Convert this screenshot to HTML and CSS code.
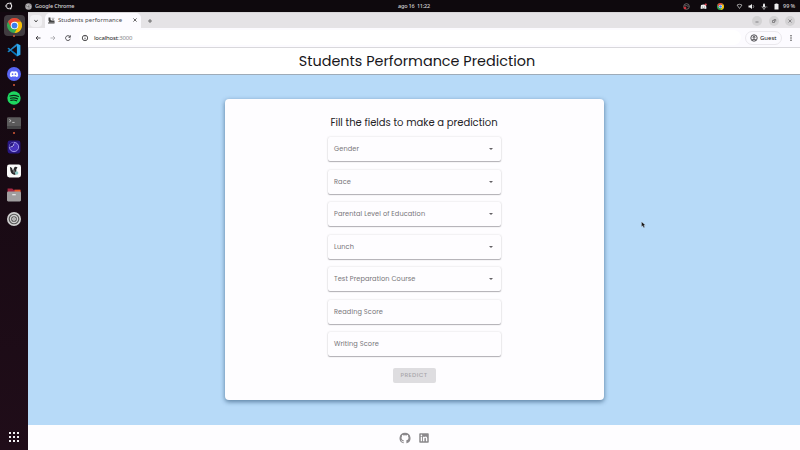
FILE: index.html
```html
<!DOCTYPE html>
<html lang="en">
<head>
<meta charset="utf-8">
<title>Students performance</title>
<link rel="stylesheet" href="styles.css">
</head>
<body>
<svg width="0" height="0" class="defs">
  <symbol id="chrome" viewBox="0 0 24 24"><circle cx="12" cy="12" r="12" fill="#35a853"/><path d="M1.6 6A12 12 0 0 1 22.4 6H12L6.8 15Z" fill="#e94335"/><path d="M22.4 6A12 12 0 0 1 12 24L17.2 15 12 6Z" fill="#fbbc05"/><circle cx="12" cy="12" r="6" fill="#fff"/><circle cx="12" cy="12" r="4.6" fill="#3b7ded"/></symbol>
  <symbol id="discord" viewBox="0 0 24 24"><path d="M8 5Q5 5 3 7 0 12 0 18q3 3 6 3l2-2q4 1 8 0l2 2q3 0 6-3 0-6-3-11-2-2-5-2l-1 1q-3-.5-6 0Z" fill="#fff"/><ellipse cx="8" cy="13" rx="2.3" ry="2.6" fill="#5865f2"/><ellipse cx="16" cy="13" rx="2.3" ry="2.6" fill="#5865f2"/></symbol>
</svg>
<header class="system">
  <svg class="ubuntu" viewBox="0 0 14 14" fill="none" stroke="#f3f0f2"><circle cx="7" cy="7" r="4.7" stroke-width="1.8"/><g fill="#f3f0f2" stroke="#0e090d" stroke-width=".8"><circle cx="2" cy="7" r="2"/><circle cx="9.6" cy="2.600" r="2"/><circle cx="9.6" cy="11.400" r="2"/></g></svg>
  <svg class="appicon" viewBox="0 0 14 14"><circle cx="7" cy="7" r="6.5" fill="#aaa7aa"/><circle cx="7" cy="7" r="3" fill="#777" stroke="#ddd" stroke-width="1.2"/><path d="M7 4h6M4.5 8.5 2 4M9.5 8.5 6.5 13" stroke="#656565"/></svg>
  <span class="appname">Google Chrome</span>
  <span class="clock">ago 16&nbsp; 11:22</span>
  <div class="tray">
    <svg viewBox="0 0 14 14" fill="none" stroke="#8f8b8d" stroke-width="1.4"><circle cx="7" cy="7" r="5.6"/><path d="M3 6q4-2 8 1"/><circle cx="4" cy="10" r="2" fill="#df3340" stroke="#df3340"/></svg>
    <svg viewBox="0 0 14 14"><path d="M2 4q5-2 10 0l1 7-3 1-1-1H5l-1 1-3-1Z" fill="#eee"/><circle cx="5" cy="8" r="1" fill="#777"/><circle cx="9" cy="8" r="1" fill="#777"/><circle cx="11.500" cy="3" r="2.200" fill="#e44452"/></svg>
    <svg><use href="#chrome"/></svg>
    <svg viewBox="0 0 14 14" fill="none" stroke="#bbb" stroke-width="1.6"><path d="M2 4q5-3 10 0L7 11Z"/></svg>
    <svg viewBox="0 0 14 14" fill="#eee"><path d="M1 5h3l4-3v10L4 9H1Z"/><path d="M10 4q3 3 0 6" fill="none" stroke="#aaa" stroke-width="1.5"/></svg>
    <svg viewBox="0 0 14 14" fill="#eee"><rect x="4" y="1" width="4" height="8" rx="2"/><path d="M2 6q0 5 4 5t4-5M6 11v3" fill="none" stroke="#ddd" stroke-width="1.2"/><circle cx="12" cy="8" r="1" fill="#888"/></svg>
    <svg viewBox="0 0 14 14" fill="#eee"><path d="M5 1h4v1h2v11H3V2h2Z"/></svg>
    <span>99 %</span>
  </div>
</header>
<div class="desktop">
  <nav class="dock">
    <div class="app active running"><svg><use href="#chrome"/></svg></div>
    <div class="app running"><svg viewBox="0 0 24 24"><path d="M2.500 8 17 19v4L1 9.300Z" fill="#0877b9"/><path d="M2.500 16 17 5V1L1 14.700Z" fill="#2489ca"/><path d="m1 9.300 1.500-1.300L7 11.500 4.500 14.500 2.500 16 1 14.700 4 12Z" fill="#1782c2"/><path d="M17 1v22l6-3V4Z" fill="#2fa8ee"/></svg></div>
    <div class="app running"><svg viewBox="0 0 24 24"><circle cx="12" cy="12" r="12" fill="#5865f2"/><use href="#discord" x="4.500" y="4" width="15" height="15"/></svg></div>
    <div class="app running"><svg viewBox="0 0 24 24"><circle cx="12" cy="12" r="11.5" fill="#1ed760"/><path d="M5 8.5q8-2.5 14.5 1M6 12.5q7-2 12 1M6.5 16q6-1.5 10 .8" fill="none" stroke="#0b2514" stroke-width="2" stroke-linecap="round"/></svg></div>
    <div class="app running"><svg viewBox="0 0 24 24"><rect y="2" width="24" height="20" rx="2" fill="#5b5a5b"/><path d="M0 17h24v3q0 2-2 2H2q-2 0-2-2Z" fill="#454446"/><path d="m4 6 3 2-3 2M9 11h4" fill="none" stroke="#ddd" stroke-width="1.3"/></svg></div>
    <div class="app"><svg viewBox="0 0 24 24"><rect x="1" y="1" width="22" height="22" rx="4" fill="#281782"/><circle cx="12" cy="12" r="8" fill="#4934be" stroke="#a59bf0" stroke-width="1.6"/><path d="M12 4v8H4q0-7 8-8Z" fill="#271780"/><path d="M12 6q0 6-6 6" fill="none" stroke="#c9c3fa" stroke-width="1.500"/></svg></div>
    <div class="app"><svg viewBox="0 0 24 24"><rect x="0" y="1" width="24" height="22" rx="4" fill="#fafafa"/><path d="M5 5q4 0 5 6l3-6q3-1 5 1l-2 3v6l-2 4q-7-1-8-7Z" fill="#29282a"/><path d="M10 9q3 2 2 6" stroke="#fff" fill="none"/><circle cx="16.500" cy="15.500" r="3" fill="#8dc8c5"/></svg></div>
    <div class="app"><svg viewBox="0 0 24 24"><path d="M1 1h8l2 2h12v6H1Z" fill="#a72742"/><path d="M13 3h10v4H13Z" fill="#e85b27"/><rect y="6" width="24" height="17" rx="2" fill="#a09e9f"/><path d="M9 11.500h6" stroke="#eee" stroke-width="2"/></svg></div>
    <div class="app"><svg viewBox="0 0 24 24"><circle cx="12" cy="12" r="12" fill="#d0d0d0"/><circle cx="12" cy="12" r="8.200" fill="none" stroke="#555" stroke-width="2"/><circle cx="12" cy="12" r="4" fill="#eee" stroke="#555" stroke-width="1.8"/><circle cx="12" cy="12" r="1.300" fill="#555"/></svg></div>
    <svg class="grid" viewBox="0 0 11 11" fill="#f2f0f2"><path d="M0 0h2v2H0ZM4 0h2v2H4ZM8 0h2v2H8ZM0 4h2v2H0ZM4 4h2v2H4ZM8 4h2v2H8ZM0 8h2v2H0ZM4 8h2v2H4ZM8 8h2v2H8Z"/></svg>
  </nav>
  <section class="browser">
    <div class="tabs">
      <div class="tabmenu"><svg viewBox="0 0 8 8"><path d="m2.400 3.300 1.600 1.400 1.600-1.400" fill="none" stroke="#333" stroke-width="1"/></svg></div>
      <div class="tab"><svg class="favicon" viewBox="0 0 14 14"><path d="M1 1h4v4l2 2h6v6H0v-2h3L1 7Z" fill="#444"/><path d="M7 2.500h6M8 5h4M3 11h9" stroke="#888" stroke-width="1.300"/></svg><span>Students performance</span><svg class="close" viewBox="0 0 8 8"><path d="m2.400 2.400 3.200 3.200m0-3.200L2.400 5.600" stroke="#444" stroke-width=".8"/></svg></div>
      <svg class="plus" viewBox="0 0 8 8"><path d="M4 2v4M2 4h4" stroke="#555" stroke-width=".8"/></svg>
      <div class="controls"><svg viewBox="0 0 10 10"><path d="M3.500 6h3"/></svg><svg viewBox="0 0 10 10"><path d="M3.500 4.500v2h2v-2ZM4.700 3.500h2v2"/></svg><svg viewBox="0 0 10 10"><path d="m3.500 3.500 3 3m0-3-3 3"/></svg></div>
    </div>
    <div class="toolbar">
      <svg viewBox="0 0 8 8"><path d="M6.500 4H2M4 2 2 4 4 6"/></svg>
      <svg class="muted" viewBox="0 0 8 8"><path d="M1.500 4H6M4 2l2 2-2 2"/></svg>
      <svg viewBox="0 0 8 8"><path d="M6 2.800A2.400 2.400 0 1 0 6.300 4.700M6.300 1.300v2H4.500"/></svg>
      <div class="address"><svg viewBox="0 0 8 8"><circle cx="4" cy="4" r="2.7"/><path d="M4 3.7v1.7M4 2.400v.7"/></svg><span class="url"><b>localhost</b>:3000</span></div>
      <div class="guest"><svg viewBox="0 0 8 8"><circle cx="4" cy="4" r="3.2"/><circle cx="4" cy="3.2" r="1"/><path d="M2 6q2-1.7 4 0"/></svg><span>Guest</span></div>
      <svg class="kebab" viewBox="0 0 8 8"><circle cx="4" cy="1.7" r=".7"/><circle cx="4" cy="4" r=".7"/><circle cx="4" cy="6.300" r=".7"/></svg>
    </div>
    <div class="page">
      <header class="title"><h1>Students Performance Prediction</h1></header>
      <main>
        <form class="card">
          <h2>Fill the fields to make a prediction</h2>
          <div class="fields">
            <div class="field select"><span>Gender</span></div>
            <div class="field select"><span>Race</span></div>
            <div class="field select"><span>Parental Level of Education</span></div>
            <div class="field select"><span>Lunch</span></div>
            <div class="field select"><span>Test Preparation Course</span></div>
            <div class="field"><span>Reading Score</span></div>
            <div class="field"><span>Writing Score</span></div>
          </div>
          <button type="button" disabled>PREDICT</button>
        </form>
      </main>
      <footer>
        <svg viewBox="0 0 24 24"><path d="M12 1.3a11 11 0 0 0-3.5 21.4c.6.1.8-.2.8-.5v-2c-3.1.7-3.8-1.3-3.8-1.3-.5-1.3-1.2-1.7-1.2-1.7-1-.7.1-.7.1-.7 1.1.1 1.7 1.2 1.7 1.2 1 1.7 2.7 1.2 3.3.9.1-.7.4-1.2.7-1.5-2.4-.3-5-1.2-5-5.4 0-1.2.4-2.2 1.1-3-.1-.3-.5-1.4.1-2.9 0 0 .9-.3 3 1.1a10 10 0 0 1 5.5 0c2.1-1.4 3-1.1 3-1.1.6 1.5.2 2.6.1 2.9.7.8 1.1 1.8 1.1 3 0 4.2-2.6 5.1-5 5.4.4.3.8 1 .8 2v3.1c0 .3.2.6.8.5A11 11 0 0 0 12 1.3Z"/></svg>
        <svg viewBox="0 0 24 24"><path fill-rule="evenodd" d="M4 2.500h16q1.500 0 1.500 1.500v16q0 1.500-1.500 1.500H4Q2.500 21.500 2.500 20V4Q2.500 2.500 4 2.500ZM5.500 9.500v9h2.700v-9ZM6.900 5.200a1.600 1.600 0 1 0 0 3.200 1.600 1.600 0 0 0 0-3.200ZM10 9.500v9h2.800v-5q0-2 1.500-2t1.500 2v5h2.700v-5.500q0-3.800-3-3.800-1.900 0-2.700 1.500V9.500Z"/></svg>
      </footer>
    </div>
  </section>
</div>
<svg class="cursor" viewBox="0 0 6 9"><path d="M.6.5v6.200l1.500-1.300 1.100 2.500 1.300-.6-1.100-2.400h2Z" fill="#171717" stroke="#dce8f2" stroke-width=".4"/></svg>
</body>
</html>
```
FILE: styles.css
```css
* { box-sizing: border-box; }
body { margin: 0; width: 800px; height: 450px; overflow: hidden; font-family: "Noto Sans", sans-serif; }
svg { display: block; flex: none; }
.defs { position: absolute; }
.system { position: relative; height: 12px; background: #0e090d; color: #d8d5d7; display: flex; align-items: center; padding-left: 5px; font-size: 5.500px; line-height: 12px; font-weight: 500; letter-spacing: -.13px; }
.ubuntu { width: 8px; height: 8px; }
.appicon { width: 7px; height: 7px; margin-left: 12px; }
.appname { padding-left: 3px; }
.clock { position: absolute; left: 398px; top: 0; white-space: nowrap; letter-spacing: -.2px; }
.tray { position: absolute; right: 5px; top: 0; height: 12px; display: flex; align-items: center; }
.tray svg { width: 7px; height: 7px; margin-right: 5.500px; }
.tray svg:nth-child(1), .tray svg:nth-child(2) { margin-right: 10px; }
.tray svg:nth-child(3) { margin-right: 12px; }
.tray svg:nth-child(7) { margin-right: 3px; }
.desktop { display: flex; height: 438px; }
.dock { width: 28px; background: linear-gradient(#130810, #200d19); display: flex; flex-direction: column; align-items: center; padding-top: 3.300px; }
.app { width: 21px; height: 21px; margin-bottom: 3.200px; display: grid; place-items: center; position: relative; border-radius: 4px; }
.app svg { width: 14px; height: 14px; }
.app.active { background: #413b40; }
.app.active svg { width: 15px; height: 15px; }
.app.running::after { content: ""; position: absolute; left: 9.500px; bottom: -1px; width: 2px; height: 2px; border-radius: 1px; background: #d85a37; }
.grid { width: 11px; height: 11px; margin: auto 0 7px; }
.browser { width: 772px; background: #fff; display: flex; flex-direction: column; }
.tabs { height: 16px; background: #e5e3e6; display: flex; align-items: center; border-top: 1px solid #d8d6d8; }
.tabmenu { width: 12px; height: 12px; margin-left: 2px; border-radius: 4px; background: #f3f2f5; display: grid; place-items: center; }
.tabmenu svg { width: 8px; height: 8px; }
.tab { margin-left: 3px; width: 96px; height: 15px; background: #fcfbff; border-radius: 5px 5px 0 0; display: flex; align-items: center; padding: 0 0 1px 3px; font-size: 6px; color: #4b4a4d; }
.favicon { width: 7px; height: 7px; margin-right: 3px; }
.tab span { width: 73px; white-space: nowrap; letter-spacing: .05px; }
.close, .plus { width: 8px; height: 8px; }
.plus { margin-left: 5px; }
.controls { margin-left: auto; display: flex; gap: 6.500px; padding-right: 5px; }
.controls svg { width: 10px; height: 10px; border-radius: 50%; background: #d3d2d4; fill: none; stroke: #656467; stroke-width: .7; }
.toolbar { height: 20px; background: #fcfbff; border-bottom: 1px solid #d9d8dc; display: flex; align-items: center; padding: 0 5px 0 6px; }
.toolbar > svg, .address svg, .guest svg { width: 8px; height: 8px; margin-right: 7px; fill: none; stroke: #343336; stroke-width: .85; }
.toolbar .muted { stroke: #aaa9ad; }
.address { height: 15px; width: 662px; border-radius: 8px; background: #fff; display: flex; align-items: center; padding-left: 2px; font-size: 6px; color: #88878b; }
.address svg { margin-right: 5px; }
.url { white-space: nowrap; letter-spacing: -.18px; }
.url b { font-weight: 400; color: #222; }
.guest { width: 37px; height: 14px; border: 1px solid #eae8ed; border-radius: 7px; display: flex; align-items: center; padding-left: 4px; margin-left: 4px; font-size: 6px; font-weight: 400; color: #222; flex: none; }
.guest svg { margin-right: 2px; }
.toolbar > .kebab { fill: #333; stroke: none; margin: 0 0 0 5px; }
.page { height: 402px; display: flex; flex-direction: column; box-shadow: inset 1px 0 #d6dfe8; font-family: Poppins, Lato, sans-serif; }
.title { height: 27px; border-bottom: 1px solid #9eabb8; display: grid; place-items: center; }
h1, h2 { margin: 0; font-weight: 400; white-space: nowrap; }
h1 { font-size: 14.400px; line-height: 24px; color: #171619; padding-left: 6px; }
main { height: 350px; background: #b7daf8; display: flex; justify-content: center; padding-top: 24px; }
.card { width: 379px; height: 301px; background: #fefdff; border-radius: 4px; box-shadow: 0 2px 4px #40648699, 0 1px 5px #52769855; display: flex; flex-direction: column; align-items: center; padding-top: 16px; }
h2 { font-size: 10px; line-height: 16px; color: #242326; }
.fields { display: grid; gap: 8.500px; margin-top: 6px; }
.field { width: 173px; height: 24px; border-radius: 2px; background: #fefdff; box-shadow: 0 1px 1px #77747b88, 0 0 2px #8885; display: flex; justify-content: space-between; align-items: center; padding: 0 8px 0 6.500px; font-size: 6.600px; letter-spacing: .1px; color: #777579; }
.select::after { content: ""; border: 2.400px solid transparent; border-top: 2.600px solid #626064; border-bottom: 0; }
button { width: 43px; height: 15px; margin-top: 12px; padding: 0; border: 0; border-radius: 2px; background: #dedde0; color: #aaa8ac; font: 500 6px Poppins, Lato, sans-serif; letter-spacing: .4px; }
footer { height: 25px; background: #fefdff; display: flex; justify-content: center; align-items: center; gap: 7px; }
footer svg { width: 12px; height: 12px; fill: #8b898c; }
.cursor { position: absolute; left: 641px; top: 221px; width: 5px; height: 8px; }
```
